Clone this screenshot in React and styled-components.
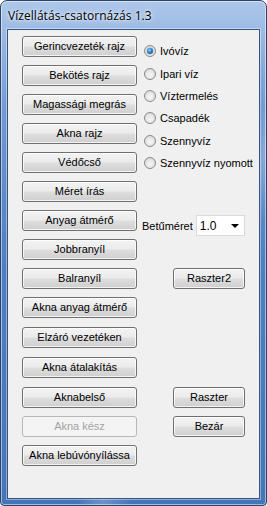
import React from "react";
import styled, { createGlobalStyle, css } from "styled-components";

const Global = createGlobalStyle`
  html, body { margin: 0; padding: 0; background: #ffffff; }
  body { width: 267px; height: 506px; overflow: hidden; }
`;

const Window = styled.div`
  box-sizing: border-box;
  width: 267px;
  height: 506px;
  display: flex;
  flex-direction: column;
  border: 1px solid #2e4468;
  border-radius: 7px 7px 4px 4px;
  background:
    linear-gradient(115deg, rgba(255,255,255,0) 62%, rgba(255,255,255,0.22) 67%, rgba(255,255,255,0) 73%),
    linear-gradient(to bottom, #adc7ea 0px, #9dbbe3 28px, #7299d2 110px, #4f7fc2 260px, #4674b8 100%);
  box-shadow: inset 0 0 0 1px rgba(255,255,255,0.5);
  overflow: hidden;
`;

const TitleBar = styled.div`
  height: 28px;
  flex: none;
  display: flex;
  align-items: center;
  padding-left: 7px;
  font-family: "Open Sans", "Noto Sans", sans-serif;
  font-size: 12px;
  color: #000000;
  letter-spacing: 0.05px;
  text-shadow: 0 0 6px rgba(255,255,255,0.9), 0 0 3px rgba(255,255,255,0.9);
`;

const Client = styled.div`
  flex: 1;
  margin: 0 6px 6px 6px;
  border: 1px solid #35547f;
  box-shadow: 0 0 0 1px rgba(255,255,255,0.4);
  background: #f0f0f0;
  padding: 6px 0 0 14px;
  display: grid;
  grid-template-columns: 115px 36px 72px;
  grid-template-rows: repeat(9, 29px) repeat(3, 30px) repeat(2, 29px) 21px;
  align-content: start;
  font-family: "Liberation Sans", Arial, sans-serif;
  font-size: 11px;
  color: #000000;
`;

const Button = styled.button`
  grid-column: ${(p) => p.$col || "1"};
  grid-row: ${(p) => p.$row};
  align-self: start;
  box-sizing: border-box;
  height: 21px;
  margin: 0;
  padding: 0 2px 1px 2px;
  border: 1px solid #707070;
  border-radius: 3px;
  background: linear-gradient(to bottom, #f3f3f3 0%, #ebebeb 48%, #dedede 52%, #cfcfcf 100%);
  box-shadow: inset 0 0 0 1px rgba(255,255,255,0.75);
  font-family: "Liberation Sans", Arial, sans-serif;
  font-size: 11px;
  color: #000000;
  white-space: nowrap;
  cursor: default;
  ${(p) =>
    p.disabled &&
    css`
      border-color: #b5b8ba;
      background: #f4f4f4;
      box-shadow: none;
      color: #a3a3a3;
    `}
`;

const RadioGroup = styled.div`
  grid-column: 2 / 4;
  grid-row: 1 / span 6;
  margin: 4px 0 0 7px;
  display: flex;
  flex-direction: column;
`;

const RadioRow = styled.label`
  height: 22.4px;
  display: flex;
  align-items: center;
  gap: 4px;
  white-space: nowrap;
`;

const RadioCircle = styled.span`
  box-sizing: border-box;
  width: 12px;
  height: 12px;
  border-radius: 50%;
  border: 1px solid #8a8a8a;
  background: radial-gradient(circle at 50% 60%, #f6f6f6 0%, #e6e6e6 50%, #cfcfcf 100%);
  display: flex;
  align-items: center;
  justify-content: center;
  flex: none;
  &::after {
    content: "";
    display: ${(p) => (p.$checked ? "block" : "none")};
    width: 6px;
    height: 6px;
    border-radius: 50%;
    background: radial-gradient(circle at 40% 35%, #8fd3ff 0%, #2a7fc8 45%, #0f4c8c 100%);
    box-shadow: 0 0 1px #0b3a6c;
  }
`;

const FontRow = styled.div`
  grid-column: 2 / 4;
  grid-row: 7;
  margin: 5px 0 0 5px;
  display: flex;
  align-items: center;
  gap: 3px;
  height: 21px;
  white-space: nowrap;
`;

const Select = styled.div`
  box-sizing: border-box;
  width: 52px;
  height: 21px;
  border: 1px solid #d8dadc;
  background: #ffffff;
  display: flex;
  align-items: center;
  justify-content: space-between;
  padding: 0 5px 0 3px;
  font-size: 12px;
`;

const Arrow = styled.span`
  width: 0;
  height: 0;
  border-left: 4px solid transparent;
  border-right: 4px solid transparent;
  border-top: 4px solid #000000;
  margin-top: 1px;
`;

const leftButtons = [
  "Gerincvezeték rajz",
  "Bekötés rajz",
  "Magassági megrás",
  "Akna rajz",
  "Védőcső",
  "Méret írás",
  "Anyag átmérő",
  "Jobbranyíl",
  "Balranyíl",
  "Akna anyag átmérő",
  "Elzáró vezetéken",
  "Akna átalakítás",
  "Aknabelső",
  "Akna kész",
  "Akna lebúvónyílássa",
];

const radios = ["Ivóvíz", "Ipari víz", "Víztermelés", "Csapadék", "Szennyvíz", "Szennyvíz nyomott"];

export default function App() {
  return (
    <>
      <Global />
      <Window>
        <TitleBar>Vízellátás-csatornázás 1.3</TitleBar>
        <Client>
          {leftButtons.map((label, i) => (
            <Button key={label} $row={i + 1} disabled={label === "Akna kész"}>
              {label}
            </Button>
          ))}
          <RadioGroup>
            {radios.map((r, i) => (
              <RadioRow key={r}>
                <RadioCircle $checked={i === 0} />
                {r}
              </RadioRow>
            ))}
          </RadioGroup>
          <FontRow>
            Betűméret
            <Select>
              1.0
              <Arrow />
            </Select>
          </FontRow>
          <Button $col="3" $row={9}>Raszter2</Button>
          <Button $col="3" $row={13}>Raszter</Button>
          <Button $col="3" $row={14}>Bezár</Button>
        </Client>
      </Window>
    </>
  );
}
